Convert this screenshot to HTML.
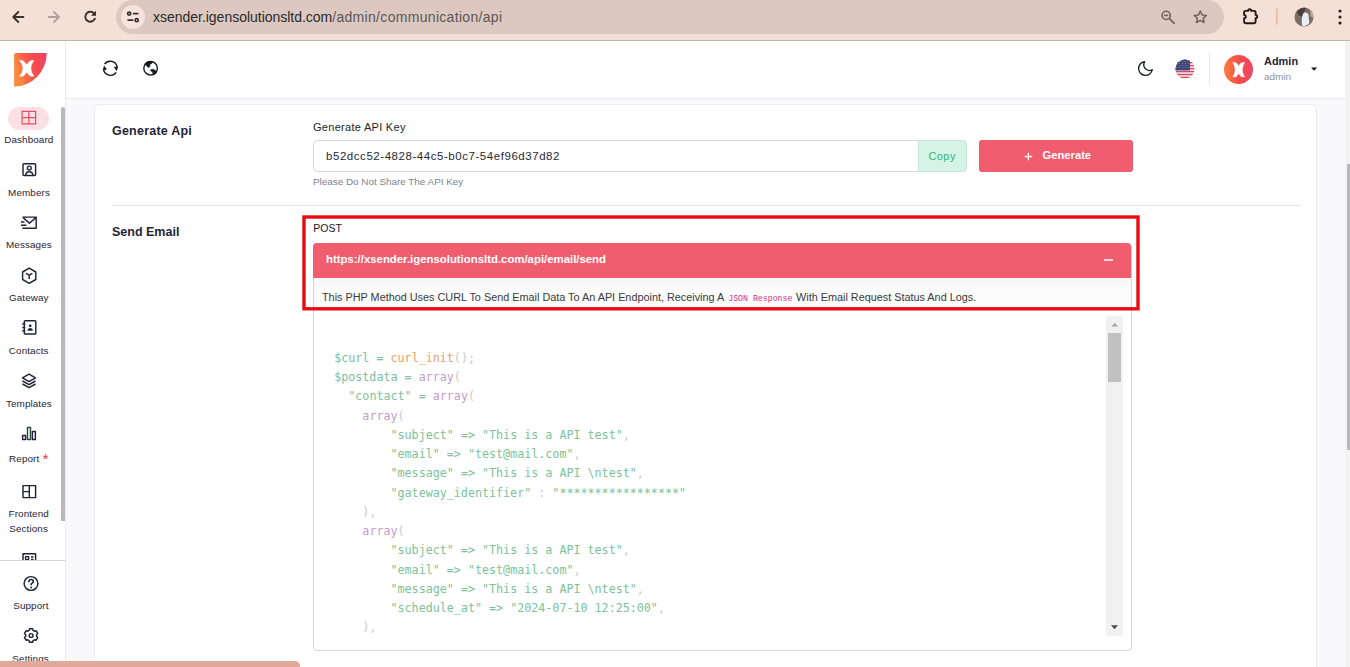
<!DOCTYPE html>
<html lang="en">
<head>
<meta charset="utf-8">
<title>API Document</title>
<style>
*{box-sizing:border-box;margin:0;padding:0}
html,body{width:1350px;height:667px;overflow:hidden;background:#f9f9fb;font-family:"Liberation Sans",Arial,sans-serif;color:#1f2333}
.abs{position:absolute}
#chrome{position:absolute;left:0;top:0;width:1350px;height:40px;background:#f5e0d8}
#urlpill{position:absolute;left:116px;top:0;width:1108px;height:34px;border-radius:17px;background:#dcc8c1}
#url{position:absolute;left:153px;top:8px;font-size:14px;line-height:18px;color:#2a2a2a;letter-spacing:0.1px;white-space:nowrap}
#url span{color:#5d5653}
#infoc{position:absolute;left:121px;top:5px;width:24px;height:24px;border-radius:12px;background:#f5e3dc}
#chromeline{position:absolute;left:0;top:40px;width:1350px;height:1px;background:#bfb4b2}
#sidebar{position:absolute;left:0;top:41px;width:66px;height:626px;background:#fff;border-right:1px solid #ebebef}
#header{position:absolute;left:66px;top:41px;width:1279px;height:58px;background:#fff;border-bottom:1px solid #e9e9f3}
#pscroll{position:absolute;left:1345px;top:41px;width:5px;height:626px;background:#f3f3f4}
#pthumb{position:absolute;left:1346.700px;top:164.300px;width:3.300px;height:286px;background:#b9b9bb}
#card{position:absolute;left:94px;top:104px;width:1223px;height:580px;background:#fff;border:1px solid #ebebf0;border-radius:5px}
.nav{position:absolute;left:0;width:57px;text-align:center;font-size:11px;line-height:15px;color:#1f2333;white-space:nowrap}
.ico{position:absolute}
pre{font-family:"Liberation Mono","DejaVu Sans Mono",monospace}
#url{letter-spacing:-0.02px}
#url span{letter-spacing:0.313px}
.nl{position:absolute;font-size:9.9px;letter-spacing:0.1px;line-height:12px;color:#1f2437;white-space:nowrap;transform:translateX(-50%)}
#sthumb{position:absolute;left:61px;top:107px;width:4px;height:414px;background:#b9b9bd;border-radius:2px 2px 0 0}
#sbottom{position:absolute;left:0;top:560px;width:66px;height:107px;background:#fff;border-top:1px solid #d6d6d9;border-right:1px solid #ebebef}
#pill{position:absolute;left:8px;top:107px;width:41px;height:23px;border-radius:12px;background:#fde0e4}
#bbar{position:absolute;left:0;top:660.5px;width:300px;height:7px;background:#e2a899;border-top-right-radius:5px}
.t{position:absolute;white-space:nowrap}
#hdiv{position:absolute;left:1209px;top:53px;width:1px;height:32px;background:#e3e4ea}
#avatar{position:absolute;left:1224px;top:54.900px;width:29px;height:29px;border-radius:50%;background:linear-gradient(90deg,#fb7f3e 0%,#f54a4a 55%,#ef4866 100%)}
#line1{position:absolute;left:112px;top:205px;width:1189px;height:1px;background:#e6e6ea}
#inp{position:absolute;left:313px;top:140px;width:606px;height:32px;border:1px solid #d3d4da;border-radius:5px 0 0 5px;background:#fff}
#copy{position:absolute;left:918px;top:140px;width:49px;height:32px;border:1px solid #c3e6d6;border-radius:0 4px 4px 0;background:#d5f3e6}
#gen{position:absolute;left:979px;top:140px;width:154px;height:32px;border-radius:3px;background:#ef5d6e}
#codebox{position:absolute;left:313px;top:243px;width:819px;height:407.500px;border:1px solid #d4d4d7;border-radius:4px;background:#fff}
#acc{position:absolute;left:313px;top:243px;width:818px;height:34.500px;border-radius:4px 4px 0 0;background:#ef5d6e}
#accbody{position:absolute;left:314px;top:277.500px;width:817px;height:32px;background:linear-gradient(#f6f6f7,#fbfbfb 35%,#fdfdfd)}
#redbox{position:absolute;left:302.500px;top:215.300px;width:837.200px;height:95px;border:3px solid #e60d14}
#ctrack{position:absolute;left:1106px;top:316.300px;width:17px;height:319.300px;background:#f1f1f1}
#cthumb{position:absolute;left:1108px;top:333px;width:13px;height:48.500px;background:#c1c1c1}
#code{font-family:"DejaVu Sans Mono","Liberation Mono",monospace;position:absolute;left:334.200px;top:349px;font-size:11.690px;line-height:19.240px;white-space:pre;color:#c9c9c9;opacity:1}
#code .g{color:#7dbe9c}#code .o{color:#eaa06a}#code .p{color:#c59cc9}#code .s{color:#7cc398}#code .y{color:#c8c8c8}
</style>
</head>
<body>
<div id="chrome">
  <div id="urlpill"></div>
  <div id="infoc"></div>
  <svg class="abs" style="left:0;top:0" width="1350" height="41" viewBox="0 0 1350 41" fill="none">
    <!-- back -->
    <path d="M23.400 17H13.600M18.300 12L13.300 17l5 5" stroke="#3a302d" stroke-width="1.850" stroke-linecap="round" stroke-linejoin="round"/>
    <!-- forward -->
    <path d="M48.600 17H58.600M54 12L59 17 54 22" stroke="#b3a19c" stroke-width="1.850" stroke-linecap="round" stroke-linejoin="round"/>
    <!-- reload -->
    <path d="M94.700 14.300A5 5 0 1 0 94.900 18.700" stroke="#3a302d" stroke-width="1.900" stroke-linecap="round"/>
    <path d="M96 10.800v5h-5z" fill="#3a302d"/>
    <!-- tune icon -->
    <circle cx="129.200" cy="13.600" r="1.550" stroke="#3a302d" stroke-width="1.700"/>
    <path d="M133.600 13.600h4.100" stroke="#3a302d" stroke-width="1.800" stroke-linecap="round"/>
    <circle cx="136.700" cy="20.200" r="1.550" stroke="#3a302d" stroke-width="1.700"/>
    <path d="M128.200 20.200h4.400" stroke="#3a302d" stroke-width="1.800" stroke-linecap="round"/>
    <!-- zoom -->
    <circle cx="1166.200" cy="15.400" r="4.100" stroke="#6f625e" stroke-width="1.600"/>
    <path d="M1164.100 15.400h4.200" stroke="#6f625e" stroke-width="1.600"/>
    <path d="M1169.400 18.600l4.800 4.800" stroke="#6f625e" stroke-width="1.700" stroke-linecap="round"/>
    <!-- star -->
    <path transform="translate(1200.300 17) scale(0.900) translate(-1200 -17)" d="M1200 10.300l2 4.400 4.800.5-3.600 3.200 1 4.700-4.200-2.400-4.200 2.400 1-4.700-3.600-3.200 4.800-.5z" stroke="#6f625e" stroke-width="1.650" stroke-linejoin="round"/>
    <!-- puzzle -->
    <path d="M1245.500 10.900H1248.100a1.600 1.600 0 0 1 3.200 0H1254.200a1.400 1.400 0 0 1 1.400 1.400V14.900a1.600 1.600 0 0 1 0 3.200V21.800a1.400 1.400 0 0 1-1.400 1.400H1245.500a1.400 1.400 0 0 1-1.400-1.400V18.300a1.700 1.700 0 0 0 0-3.400V12.300a1.400 1.400 0 0 1 1.400-1.400Z" stroke="#1f1917" stroke-width="1.900" stroke-linejoin="round"/>
    <!-- divider -->
    <path d="M1276.800 9v15" stroke="#ebbcac" stroke-width="1.800" stroke-linecap="round"/>
    <!-- avatar -->
    <circle cx="1304" cy="17" r="9.500" fill="#7b6d66"/>
    <path d="M1297 12a9.500 9.500 0 0 1 9-4.300c-1 3-3 5-3.500 8.300-2 1-4 0-5.500-4z" fill="#4a3f3b"/>
    <path d="M1303 14c2-2.500 5-1.500 5.500 1l.8 8c-2 2.500-5 3.300-7 3-.8-4-.8-8 .7-12z" fill="#e9eef6"/>
    <path d="M1310 10c2 1.500 3.500 4 3.500 7-1 1-2 .5-3-1z" fill="#b9a99d"/>
    <!-- dots -->
    <circle cx="1340" cy="11" r="1.600" fill="#2a211f"/><circle cx="1340" cy="17" r="1.600" fill="#2a211f"/><circle cx="1340" cy="23" r="1.600" fill="#2a211f"/>
  </svg>
  <div id="url">xsender.igensolutionsltd.com<span>/admin/communication/api</span></div>
  <div id="chromeline"></div>
</div>
<div id="sidebar"><div style="position:absolute;left:0;top:-41px">
  <div id="pill"></div>
  <svg class="abs" style="left:0;top:41px" width="66" height="626" viewBox="0 41 66 626" fill="none" stroke="#1f2437" stroke-width="1.450" stroke-linejoin="round">
    <defs><linearGradient id="lg" x1="0" y1="0.300" x2="1" y2="0"><stop offset="0" stop-color="#fb8a3e"/><stop offset="0.380" stop-color="#f7564a"/><stop offset="0.650" stop-color="#f4484f"/><stop offset="1" stop-color="#ef4468"/></linearGradient></defs>
    <!-- logo -->
    <path d="M14.100 55.200Q14.100 52.900 16.400 52.900L46.800 52.900A32.700 33.700 0 0 1 14.100 86.600Z" fill="url(#lg)" stroke="none"/>
    <path d="M19.200 60.400L22.400 60.400Q24.900 61.700 26.700 64.600Q28.500 61.700 30.700 60.400L33.900 60.400Q30.900 64.500 30.900 68.200Q30.900 72.300 33.900 76.300L30.700 76.300Q28.500 75 26.700 72.200Q24.900 75 22.800 76.300L19.600 76.300Q22.900 72.300 22.900 68.200Q22.900 64.500 19.200 60.400Z" fill="#fff" stroke="#fff" stroke-width="0.400" stroke-linejoin="round"/>
    <!-- dashboard grid -->
    <g stroke="#e24d63" stroke-width="1.200"><rect x="22.100" y="111.300" width="13.500" height="12.500"/><path d="M28.850 111.300v12.500M22.100 117.550h13.500"/></g>
    <!-- members -->
    <rect x="23" y="163.700" width="12.600" height="11.800" rx="1"/>
    <circle cx="29.300" cy="168" r="1.900"/>
    <path d="M25.600 175.300c.3-2.500 1.800-3.600 3.700-3.600s3.400 1.100 3.700 3.600"/>
    <!-- messages -->
    <path d="M22.400 217.100H36.200V228.200H22.400M23.200 217.600L29.400 223.300L35.800 217.600M21 221.900H24.500M21 225.200H26.400" />
    <!-- gateway -->
    <path d="M29.200 268.200l6.600 3.800v7.500l-6.600 3.800-6.600-3.800v-7.500z"/>
    <path d="M26 273.300l3.200 1.900 3.200-1.900M29.200 275.200v3.800"/>
    <!-- contacts -->
    <rect x="24.300" y="320.800" width="11.500" height="13.200" rx="0.800"/>
    <path d="M22.300 324h3M22.300 327.400h3M22.300 330.800h3"/>
    <circle cx="30.200" cy="325.800" r="1.400" fill="#1f2437" stroke="none"/>
    <path d="M27.500 330.800c.2-2 1.300-2.800 2.700-2.800s2.500.8 2.700 2.800z" fill="#1f2437" stroke="none"/>
    <!-- templates -->
    <path d="M29 374.200l6.500 3.700-6.500 3.700-6.500-3.700z"/>
    <path d="M22.500 381l6.500 3.700 6.500-3.700M22.500 384l6.500 3.700 6.500-3.700" />
    <!-- report -->
    <rect x="22.600" y="435.500" width="3" height="4"/>
    <rect x="27.500" y="427.400" width="3" height="12.100" stroke="#2c4a3c"/>
    <rect x="32.400" y="431.500" width="3" height="8"/>
    <!-- frontend -->
    <rect x="23" y="485.600" width="12.600" height="12"/>
    <path d="M29.300 485.600v12M23 491.600h6.300"/>
    <!-- next partial -->
    <rect x="23" y="553.800" width="12.600" height="12"/>
    <rect x="25.600" y="556.600" width="3" height="3"/>
    <path d="M31 557h2.500M31 559.500h2.500"/>
  </svg>
  <div class="nl" style="left:28.85px;top:133.57px">Dashboard</div>
  <div class="nl" style="left:29.0px;top:186.57px">Members</div>
  <div class="nl" style="left:28.9px;top:238.57px">Messages</div>
  <div class="nl" style="left:28.75px;top:291.57px">Gateway</div>
  <div class="nl" style="left:28.75px;top:344.57px">Contacts</div>
  <div class="nl" style="left:28.9px;top:397.57px">Templates</div>
  <div class="nl" style="left:24.2px;top:452.57px">Report</div>
  <div class="nl" style="left:45.500px;top:450.500px;color:#d8404f;font-size:15.500px;line-height:16px;letter-spacing:0">*</div>
  <div class="nl" style="left:28.7px;top:507.57px">Frontend</div>
  <div class="nl" style="left:28.65px;top:522.57px">Sections</div>
</div></div>
<div id="sthumb"></div>
<div id="sbottom">
  <svg class="abs" style="left:0;top:0" width="66" height="107" viewBox="0 561 66 107" fill="none" stroke="#1f2437" stroke-width="1.450" stroke-linejoin="round">
    <circle cx="31" cy="583.500" r="6.900"/>
    <path d="M28.900 581.700c0-1.400 1-2.200 2.200-2.200s2.200.8 2.200 2c0 1.600-2.200 1.700-2.200 3.300" stroke-linecap="round" stroke-width="1.600"/>
    <circle cx="31.100" cy="587.500" r="0.900" fill="#1f2437" stroke="none"/>
    <path d="M32.65 628.78L29.55 628.78L29.13 630.37L27.64 631.23L26.05 630.79L24.50 633.48L25.67 634.64L25.67 636.36L24.50 637.52L26.05 640.21L27.64 639.77L29.13 640.63L29.55 642.22L32.65 642.22L33.07 640.63L34.56 639.77L36.15 640.21L37.70 637.52L36.53 636.36L36.53 634.64L37.70 633.48L36.15 630.79L34.56 631.23L33.07 630.37Z"/>
    <circle cx="31.1" cy="635.5" r="1.900"/>
  </svg>
  <div class="nl" style="left:30.9px;top:38.57px">Support</div>
  <div class="nl" style="left:30.6px;top:91.97px">Settings</div>
</div>
<div id="header"></div>
<svg class="abs" style="left:66px;top:41px" width="1279" height="57" viewBox="66 41 1279 57" fill="none" stroke="#15171f" stroke-width="1.400">
  <!-- refresh -->
  <path d="M104.600 64.200A7 7 0 0 1 117.200 67M116.200 72.400A7 7 0 0 1 103.600 69.600" />
  <path d="M102.800 70.200l1.200-4.800 3 4.200z" fill="#15171f" stroke="none"/>
  <path d="M118 66.400l-1.200 4.800-3-4.200z" fill="#15171f" stroke="none"/>
  <!-- globe -->
  <circle cx="150.600" cy="68.300" r="6.800"/>
  <path d="M144.900 63.800L147.600 61.700L152.400 61.700L151.800 63.500L149.700 64.400L150 66.500L148.500 67.400L146.400 65.700Z" fill="#15171f" stroke="#15171f" stroke-width="0.600" stroke-linejoin="round"/>
  <path d="M150.600 69.800L153.300 69.200L156 71L156.600 72.800L154.500 74.600L153 74L152.700 71.900L150.900 71Z" fill="#15171f" stroke="#15171f" stroke-width="0.600" stroke-linejoin="round"/>
  <!-- moon -->
  <path d="M1144.700 61.700A6.900 6.900 0 1 0 1152.300 69.700A5.700 5.700 0 0 1 1144.700 61.700Z" stroke-linejoin="round" stroke-width="1.300"/>
  <!-- caret -->
  <path d="M1311 67.500h6.200l-3.100 3.300z" fill="#15171f" stroke="none"/>
</svg>
<svg class="abs" style="left:1175.300px;top:59.400px" width="20" height="20" viewBox="0 0 20 20">
  <defs><clipPath id="fc"><circle cx="10" cy="10" r="9.600"/></clipPath></defs>
  <g clip-path="url(#fc)">
    <rect width="20" height="20" fill="#f6f1f3"/>
    <g fill="#cf4a62"><rect y="0.00" width="20" height="1.480"/><rect y="2.96" width="20" height="1.480"/><rect y="5.92" width="20" height="1.480"/><rect y="8.88" width="20" height="1.480"/><rect y="11.84" width="20" height="1.480"/><rect y="14.80" width="20" height="1.480"/><rect y="17.76" width="20" height="1.480"/></g>
    <rect width="15" height="11.400" fill="#3c4679"/>
    <g fill="#8c93b8"><circle cx="3" cy="2.500" r="0.500"/><circle cx="6" cy="2.500" r="0.500"/><circle cx="9" cy="2.500" r="0.500"/><circle cx="12" cy="2.500" r="0.500"/><circle cx="4.500" cy="4.500" r="0.500"/><circle cx="7.500" cy="4.500" r="0.500"/><circle cx="10.500" cy="4.500" r="0.500"/><circle cx="13.500" cy="4.500" r="0.500"/><circle cx="3" cy="6.500" r="0.500"/><circle cx="6" cy="6.500" r="0.500"/><circle cx="9" cy="6.500" r="0.500"/><circle cx="12" cy="6.500" r="0.500"/><circle cx="1.500" cy="8.500" r="0.500"/><circle cx="4.500" cy="8.500" r="0.500"/><circle cx="7.500" cy="8.500" r="0.500"/><circle cx="10.500" cy="8.500" r="0.500"/><circle cx="13.500" cy="8.500" r="0.500"/></g>
  </g>
</svg>
<div id="hdiv"></div>
<div id="avatar"></div>
<svg class="abs" style="left:1224px;top:54.900px" width="29" height="29" viewBox="0 0 29 29"><path d="M8.800 7.600L11.500 7.600Q13.300 8.600 14.700 11Q16.100 8.600 17.900 7.600L20.700 7.600Q18.300 11.500 18.300 14.700Q18.300 18 20.600 21.900L17.800 21.900Q16.100 20.900 14.700 18.500Q13.300 20.900 11.600 21.900L8.800 21.900Q11.100 18 11.100 14.700Q11.100 11.500 8.800 7.600Z" fill="#fff" stroke="#fff" stroke-width="0.400" stroke-linejoin="round"/></svg>
<div class="t" style="left:1264px;top:54.800px;font-size:10.900px;line-height:13px;font-weight:bold;color:#1f2437;letter-spacing:0.050px">Admin</div>
<div class="t" style="left:1264px;top:70.800px;font-size:9.900px;line-height:12px;color:#8a91a4">admin</div>
<div id="card"></div>
<div class="t" style="left:112px;top:124.200px;font-size:12.500px;line-height:15px;font-weight:bold;letter-spacing:0.220px;color:#1f2437">Generate Api</div>
<div class="t" style="left:313px;top:120.500px;font-size:11px;line-height:13px;letter-spacing:0.290px;color:#1b1f2e">Generate API Key</div>
<div id="inp"></div>
<div class="t" style="left:326px;top:149px;font-size:11.500px;line-height:14px;letter-spacing:0.550px;color:#252a3a">b52dcc52-4828-44c5-b0c7-54ef96d37d82</div>
<div id="copy"></div>
<div class="t" style="left:928.500px;top:149.500px;font-size:11px;line-height:13px;letter-spacing:0.400px;color:#2db777">Copy</div>
<div id="gen"></div>
<svg class="abs" style="left:1023px;top:151px" width="11" height="11" viewBox="0 0 11 11"><path d="M5.400 1.700v7.600M1.600 5.500h7.600" stroke="#fff" stroke-width="1.300"/></svg>
<div class="t" style="left:1042.600px;top:148.800px;font-size:11.200px;line-height:13px;font-weight:bold;color:#fff">Generate</div>
<div class="t" style="left:313px;top:175.800px;font-size:9.900px;line-height:12px;color:#7d8393">Please Do Not Share The API Key</div>
<div id="line1"></div>
<div class="t" style="left:112px;top:224.800px;font-size:12.500px;line-height:15px;font-weight:bold;color:#1f2437">Send Email</div>
<div id="codebox"></div>
<div id="accbody"></div>
<div id="acc"></div>
<div class="t" style="left:313.300px;top:221.500px;font-size:10.500px;line-height:13px;color:#15171f">POST</div>
<div class="t" style="left:326px;top:252.800px;font-size:11.390px;line-height:13px;font-weight:bold;color:#fff">https://xsender.igensolutionsltd.com/api/email/send</div>
<div style="position:absolute;left:1104px;top:259.400px;width:9px;height:1.300px;background:#f9d3d8"></div>
<div class="t" style="left:322px;top:291.400px;font-size:10.850px;line-height:13px;color:#3a3a3a">This PHP Method Uses CURL To Send Email Data To An API Endpoint, Receiving A <code style="font-family:'Liberation Mono',monospace;font-size:8.230px;color:#d63384;margin:0 0.6px 0 1.6px">JSON Response</code> With Email Request Status And Logs.</div>
<svg class="abs" style="left:295px;top:210px" width="850" height="106" viewBox="295 210 850 106"><rect x="304" y="217" width="834" height="91.800" fill="none" stroke="#e80c12" stroke-width="3.400"/></svg>
<div id="ctrack"></div><div id="cthumb"></div>
<svg class="abs" style="left:1106px;top:316px" width="17" height="318" viewBox="0 0 17 318"><path d="M5.300 10.600h6.800l-3.400-3.600z" fill="#a3a3a3"/><path d="M5 309.300h7l-3.500 3.900z" fill="#4a4a4a"/></svg>
<pre id="code"><span class="g">$curl</span> <span class="g">=</span> <span class="o">curl_init</span>();
<span class="g">$postdata</span> <span class="g">=</span> <span class="p">array</span>(
  <span class="s">"contact"</span> <span class="g">=</span> <span class="p">array</span>(
    <span class="p">array</span>(
        <span class="s">"subject"</span> <span class="g">=&gt;</span> <span class="s">"This is a API test"</span>,
        <span class="s">"email"</span> <span class="g">=&gt;</span> <span class="s">"test@mail.com"</span>,
        <span class="s">"message"</span> <span class="g">=&gt;</span> <span class="s">"This is a API \ntest"</span>,
        <span class="s">"gateway_identifier"</span> <span class="y">:</span> <span class="s">"*****************"</span>
    ),
    <span class="p">array</span>(
        <span class="s">"subject"</span> <span class="g">=&gt;</span> <span class="s">"This is a API test"</span>,
        <span class="s">"email"</span> <span class="g">=&gt;</span> <span class="s">"test@mail.com"</span>,
        <span class="s">"message"</span> <span class="g">=&gt;</span> <span class="s">"This is a API \ntest"</span>,
        <span class="s">"schedule_at"</span> <span class="g">=&gt;</span> <span class="s">"2024-07-10 12:25:00"</span>,
    ),</pre>
<div id="bbar"></div>
<div id="pscroll"></div><div id="pthumb"></div>
</body>
</html>
